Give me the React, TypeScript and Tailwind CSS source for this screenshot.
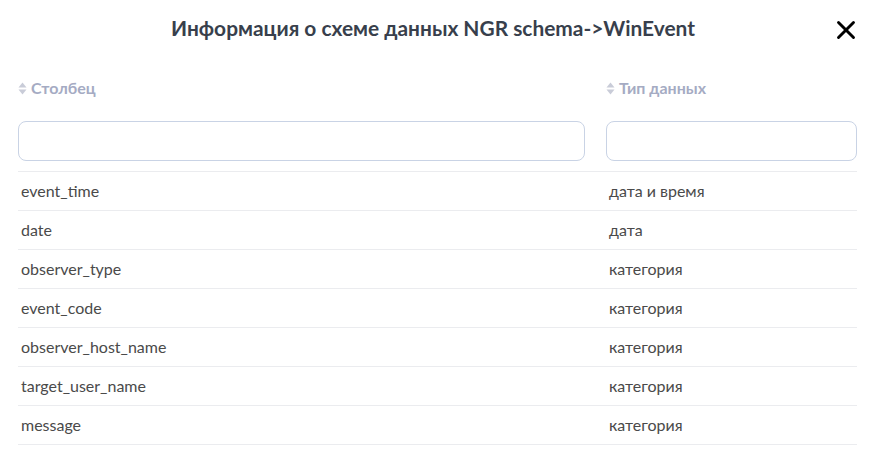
import { X } from 'lucide-react'

const rows = [
  { name: 'event_time', type: 'дата и время' },
  { name: 'date', type: 'дата' },
  { name: 'observer_type', type: 'категория' },
  { name: 'event_code', type: 'категория' },
  { name: 'observer_host_name', type: 'категория' },
  { name: 'target_user_name', type: 'категория' },
  { name: 'message', type: 'категория' },
]

function SortIcon() {
  return (
    <svg width="9" height="13" viewBox="0 0 9 13" className="shrink-0">
      <path d="M4.5 0.5 L8.5 5.5 L0.5 5.5 Z" fill="#c9ccd8" />
      <path d="M4.5 12.5 L8.5 7.5 L0.5 7.5 Z" fill="#c9ccd8" />
    </svg>
  )
}

export default function App() {
  return (
    <div className="w-[879px] h-[471px] bg-white font-['Lato','Noto_Sans',sans-serif] overflow-hidden">
      <div className="relative h-[58px] flex items-center justify-center pr-[13px]">
        <h1 className="text-[20.9px] font-bold text-[#383f4c] -mt-[3px]">
          Информация о схеме данных NGR schema-&gt;WinEvent
        </h1>
        <button className="absolute right-[18px] top-[15px] text-black">
          <X className="w-[30px] h-[30px]" strokeWidth={2.3} />
        </button>
      </div>

      <div className="pl-[18px] pr-[22px]">
        <div className="flex h-[60px] items-center">
          <div className="w-[588px] flex items-center gap-[4px] text-[16px] font-bold text-[#a5abc3]">
            <SortIcon />
            <span>Столбец</span>
          </div>
          <div className="flex-1 flex items-center gap-[4px] text-[16px] font-bold text-[#a5abc3]">
            <SortIcon />
            <span>Тип данных</span>
          </div>
        </div>

        <div className="flex mt-[3px] mb-[10px]">
          <div className="w-[588px]">
            <input className="w-[567px] h-[40px] rounded-[8px] border border-[#c9d3e5] outline-none px-3" />
          </div>
          <input className="flex-1 h-[40px] rounded-[8px] border border-[#c9d3e5] outline-none px-3" />
        </div>

        <div className="border-t border-[#ebecef]">
          {rows.map((r) => (
            <div key={r.name} className="flex h-[39px] items-center border-b border-[#ebecef] text-[16px] text-[#4a4a4a]">
              <div className="w-[588px] pl-[3px] -mt-[1px]">{r.name}</div>
              <div className="flex-1 pl-[3px] -mt-[1px]">{r.type}</div>
            </div>
          ))}
        </div>
      </div>
    </div>
  )
}
